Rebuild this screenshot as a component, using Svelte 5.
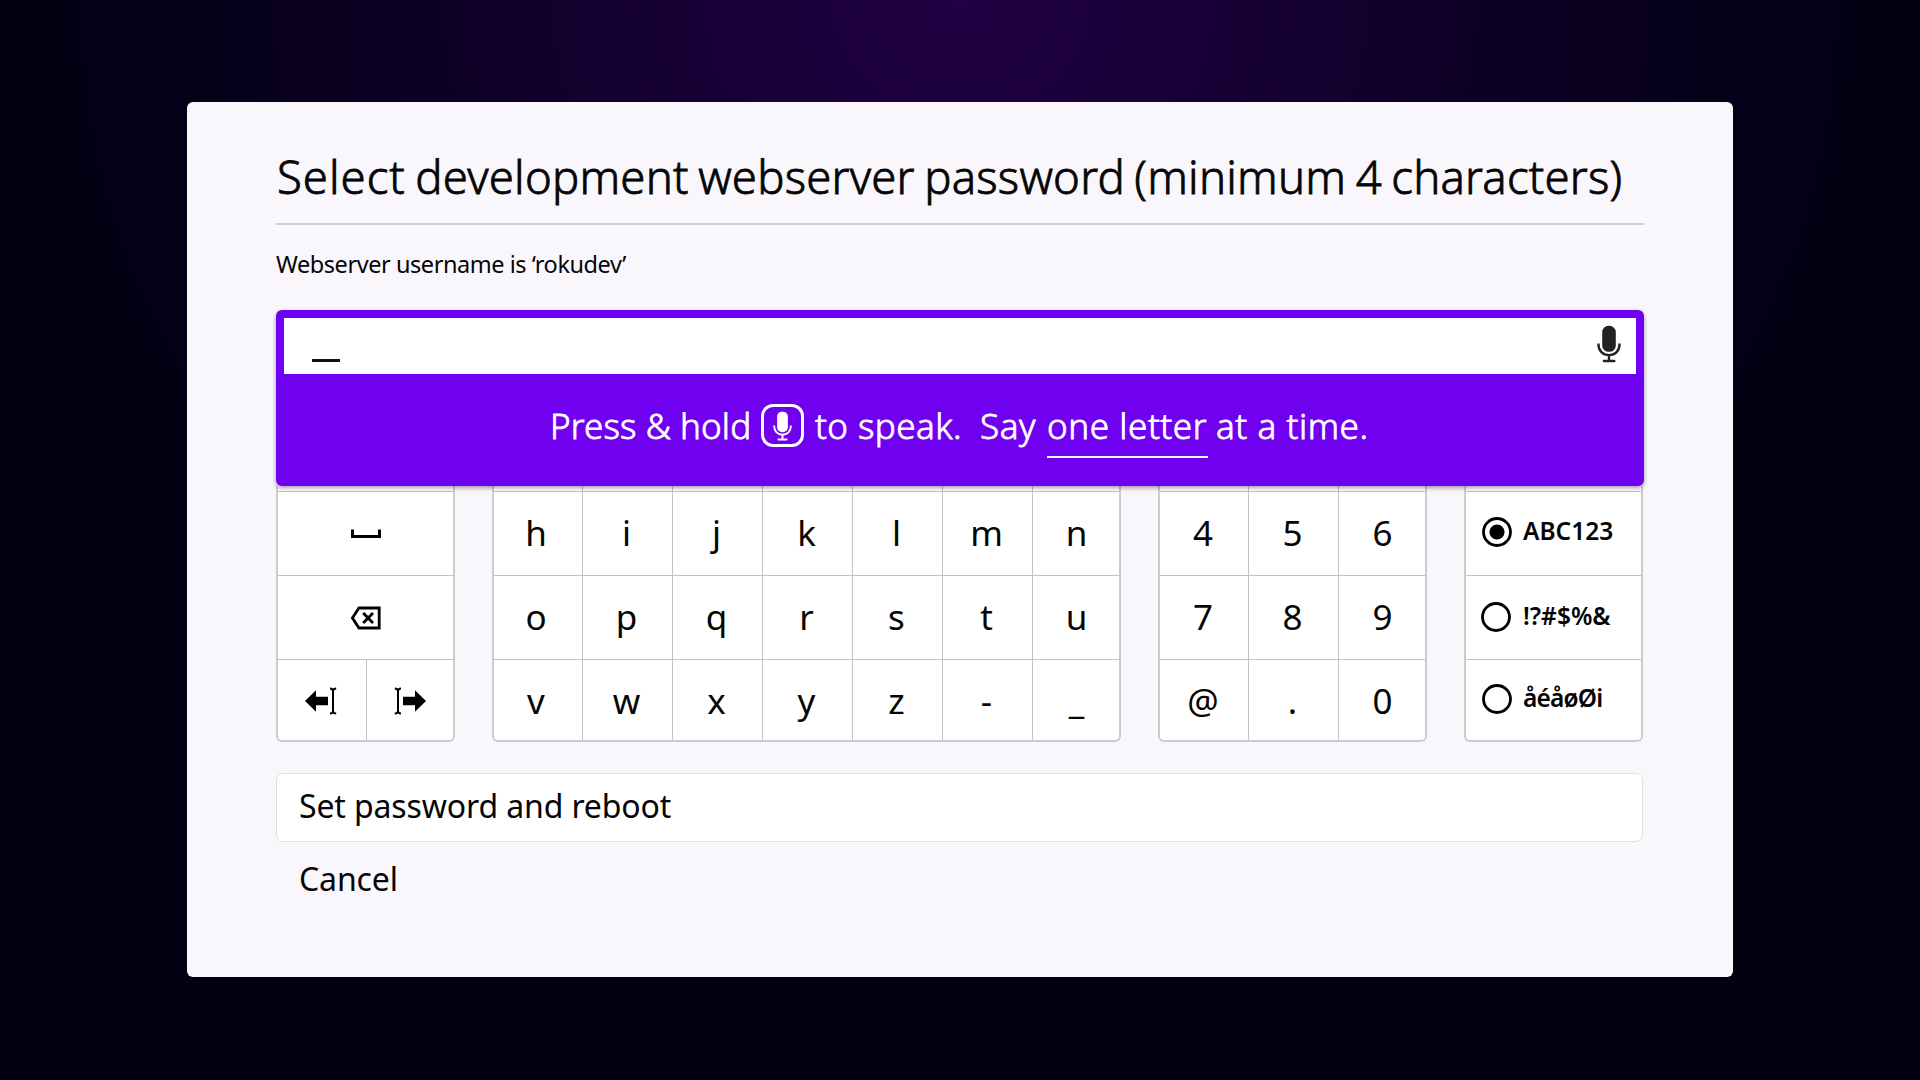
<script>
  const letters = [...'hijklmnopqrstuvwxyz-_'];
  const digits = [...'456789@.0'];
  const modes = [
    { label: 'ABC123', cls: 'alpha', checked: true },
    { label: '!?#$%&', cls: 'symbols', checked: false },
    { label: 'åéåøØi', cls: 'accents', checked: false }
  ];
</script>

{#snippet mic(cls)}
  <svg class={cls} viewBox="0 0 24 38" aria-hidden="true">
    <rect x="5.2" y="0.8" width="13.6" height="26" rx="6.3" fill="currentColor" />
    <path d="M1.5 18.5v1.2c0 6 4.3 10.4 10.5 10.4s10.5-4.4 10.5-10.4v-1.2M12 30v6" fill="none" stroke="currentColor" stroke-width="2.4" />
    <path d="M7 36h10.2" stroke="currentColor" stroke-width="2.6" stroke-linecap="round" />
  </svg>
{/snippet}

<main class="screen">
  <section class="dialog">
    <h1><span class="lead">Select</span> development webserver password (minimum 4 characters)</h1>
    <p class="note">Webserver username is ‘rokudev’</p>

    <div class="voice">
      <div class="field">
        <span class="cursor"></span>
        {@render mic('field-mic')}
      </div>
      <div class="hint">
        <span class="press">Press &amp; hold</span>
        <span class="mic-key">{@render mic('key-mic')}</span>
        <span class="speak">to speak.</span>
        <span>Say</span>
        <span class="underlined">one letter</span>
        <span>at a time.</span>
      </div>
    </div>

    <div class="keyboard">
      <div class="group edit">
        <div class="key wide stub"></div>
        <div class="key wide">
          <svg width="32" height="12" viewBox="0 0 32 12"><path d="M2.5 1.6v6.8h27V1.6" fill="none" stroke="#000" stroke-width="3" /></svg>
        </div>
        <div class="key wide">
          <svg width="32" height="24" viewBox="0 0 32 24">
            <path d="M9 2h20.2v20H9L2.4 12z" fill="none" stroke="#000" stroke-width="2.8" />
            <path d="M13.2 7l9.8 10M23 7l-9.8 10" stroke="#000" stroke-width="2.8" />
          </svg>
        </div>
        <div class="key back">
          <svg width="34" height="28" viewBox="0 0 34 28">
            <path d="M1 14L12 3.3v6.5h12v8.4H12v6.5z" />
            <path d="M26 1.4q3 .2 3 2.6v20q0 2.4-3 2.6M32.2 1.4q-3.2.2-3.2 2.6M32.2 26.6q-3.2-.2-3.2-2.6" fill="none" stroke="#000" stroke-width="2" />
          </svg>
        </div>
        <div class="key">
          <svg width="34" height="28" viewBox="0 0 34 28">
            <path d="M33 14L22 3.3v6.5H10v8.4h12v6.5z" />
            <path d="M8 1.4q-3 .2-3 2.6v20q0 2.4 3 2.6M1.8 1.4q3.2.2 3.2 2.6M1.8 26.6q3.2-.2 3.2-2.6" fill="none" stroke="#000" stroke-width="2" />
          </svg>
        </div>
      </div>

      <div class="group letters">
        {#each Array(7) as _}<div class="key stub"></div>{/each}
        {#each letters as k}<div class="key">{k}</div>{/each}
      </div>

      <div class="group digits">
        {#each Array(3) as _}<div class="key stub"></div>{/each}
        {#each digits as k}<div class="key">{k}</div>{/each}
      </div>

      <div class="group modes">
        <div class="key stub"></div>
        {#each modes as m}
          <div class="key mode {m.cls}">
            <svg width="30" height="30" viewBox="0 0 30 30">
              <circle cx="15" cy="15" r="13.5" fill="none" stroke="#000" stroke-width="2.8" />
              {#if m.checked}<circle cx="15" cy="15" r="7.6" />{/if}
            </svg>
            <span>{m.label}</span>
          </div>
        {/each}
      </div>
    </div>

    <div class="action primary">Set password and reboot</div>
    <div class="action">Cancel</div>
  </section>
</main>

<style>
  :global(body) {
    background: #020011;
    overflow: hidden;
  }
  .screen {
    width: 1920px;
    height: 1080px;
    box-sizing: border-box;
    padding: 102px 187px 103px;
    background: radial-gradient(ellipse 980px 900px at 50% 0, #210044 0%, #180036 26%, #0c0024 56%, #050018 80%, #020012 100%);
    font-family: 'Noto Sans', 'Open Sans', sans-serif;
    color: #050505;
  }
  .dialog {
    height: 875px;
    box-sizing: border-box;
    padding: 40px 89px 0;
    border-radius: 6px;
    background: #f9f6fc;
  }
  h1 {
    margin: 0;
    height: 81px;
    line-height: 68px;
    font-size: 45.5px;
    font-weight: 300;
    -webkit-text-stroke: 0.8px currentColor;
    letter-spacing: 0.22px;
    word-spacing: -2.6px;
    text-indent: 1px;
    white-space: nowrap;
    border-bottom: 2px solid #d2cfd5;
  }
  .lead {
    letter-spacing: 1px;
  }
  .note {
    margin: 23px 0 30px;
    font-size: 23.5px;
    line-height: 32px;
    letter-spacing: -0.44px;
  }
  .voice {
    position: relative;
    height: 176px;
    box-sizing: border-box;
    padding: 8px 8px 0;
    border-radius: 6px;
    background: #7000f0;
    box-shadow: 0 2px 4px rgba(30, 10, 50, 0.4);
  }
  .field {
    height: 56px;
    box-sizing: border-box;
    display: flex;
    justify-content: space-between;
    align-items: flex-start;
    padding: 7px 15px 0 28px;
    background: #fff;
    color: #222;
  }
  .cursor {
    width: 28px;
    height: 3px;
    margin-top: 34px;
    background: #111;
  }
  .field-mic {
    width: 24px;
    height: 38px;
  }
  .hint {
    display: grid;
    grid-template-columns: 211px 54px 165px 67px 169px auto;
    align-items: center;
    height: 103px;
    padding-left: 266px;
    color: #fff;
    font-size: 35px;
    font-weight: 300;
    -webkit-text-stroke: 0.8px currentColor;
    letter-spacing: 0.58px;
    line-height: 48px;
    white-space: nowrap;
  }
  .press {
    letter-spacing: 0.12px;
  }
  .speak {
    letter-spacing: 0.45px;
  }
  .mic-key {
    width: 43px;
    height: 43px;
    box-sizing: border-box;
    display: flex;
    justify-content: center;
    align-items: center;
    border: 3px solid #fff;
    border-radius: 12px;
  }
  .key-mic {
    width: 21px;
    height: 30px;
  }
  .underlined {
    position: relative;
  }
  .underlined::after {
    content: '';
    position: absolute;
    left: 0;
    bottom: -8px;
    width: 161px;
    height: 2px;
    background: #fff;
  }
  .keyboard {
    display: flex;
    justify-content: space-between;
    height: 256px;
    padding-right: 1px;
  }
  .group {
    display: grid;
    grid-template-rows: 6px 84px 84px 80px;
    box-sizing: border-box;
    overflow: hidden;
    border: 2px solid #cccbcf;
    border-top: 0;
    border-radius: 0 0 6px 6px;
    background: #fff;
  }
  .edit {
    width: 179px;
    grid-template-columns: 89px 86px;
  }
  .letters {
    width: 629px;
    grid-template-columns: 89px repeat(5, 90px) 1fr;
  }
  .digits {
    width: 269px;
    grid-template-columns: 89px 90px 1fr;
  }
  .modes {
    width: 179px;
    grid-template-columns: 1fr;
  }
  .wide {
    grid-column: span 2;
  }
  .key {
    display: flex;
    justify-content: center;
    align-items: center;
    box-sizing: border-box;
    border-right: 1px solid #c3c2c6;
    border-bottom: 1px solid #c3c2c6;
    font-size: 35px;
    line-height: 48px;
  }
  .letters .key:not(.stub),
  .digits .key:not(.stub) {
    padding: 0 2px 2px 0;
  }
  .letters .key:nth-child(7n + 1):not(.stub) {
    padding-right: 4px;
  }
  .letters .key:nth-last-child(-n + 7):not(.stub),
  .digits .key:nth-last-child(-n + 3):not(.stub) {
    padding-top: 2px;
    padding-bottom: 0;
  }
  .letters .key:nth-child(7n):not(.stub),
  .digits .key:nth-child(3n):not(.stub) {
    padding-right: 0;
    padding-left: 1px;
  }
  .edit .key:nth-last-child(-n + 2) {
    padding-top: 1px;
  }
  .back {
    padding-right: 3px;
  }
  .wide,
  .letters .key:nth-child(7n),
  .digits .key:nth-child(3n),
  .edit .key:last-child,
  .modes .key {
    border-right: 0;
  }
  .edit .key:nth-last-child(-n + 2),
  .letters .key:nth-last-child(-n + 7),
  .digits .key:nth-last-child(-n + 3),
  .modes .key:last-child {
    border-bottom: 0;
  }
  .mode {
    justify-content: flex-start;
    gap: 11px;
    padding: 0 0 4px 16px;
    font-size: 24.5px;
    font-weight: 600;
  }
  .alpha span {
    padding-bottom: 1px;
  }
  .symbols {
    padding-bottom: 1px;
    padding-left: 15px;
    gap: 12px;
  }
  .symbols span {
    padding-bottom: 3px;
  }
  .accents {
    padding-bottom: 3px;
    letter-spacing: -0.8px;
  }
  .accents span {
    padding-bottom: 1px;
  }
  .action {
    height: 69px;
    box-sizing: border-box;
    padding: 11px 23px 0;
    font-size: 32px;
    line-height: 46px;
    letter-spacing: -0.13px;
  }
  .primary {
    margin: 31px 1px 3px 0;
    padding-top: 9px;
    padding-left: 22px;
    border: 1px solid #e0dee3;
    border-radius: 7px;
    background: #fff;
  }
</style>
